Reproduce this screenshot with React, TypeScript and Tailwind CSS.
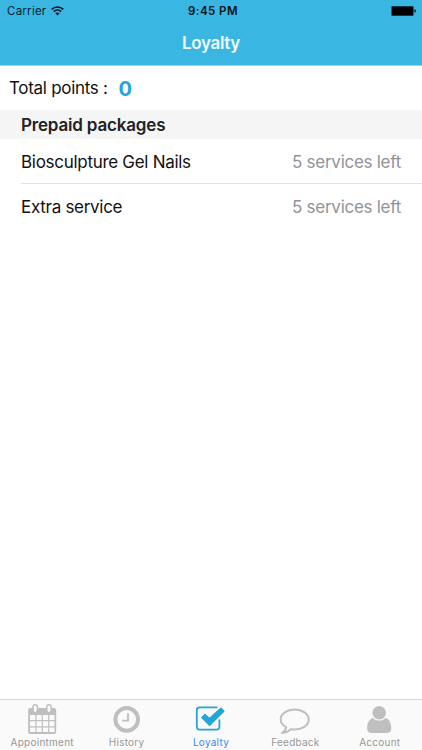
import React from 'react';

interface IPackage {
  name: string;
  left: number;
}

interface ITab {
  label: string;
  icon: React.ReactNode;
  active?: boolean;
}

const packages: IPackage[] = [
  { name: 'Biosculpture Gel Nails', left: 5 },
  { name: 'Extra service', left: 5 },
];

const CalendarIcon = () => (
  <svg width="40" height="34" viewBox="0 0 40 34" fill="none">
    <path
      d="M8.2 7H32.2Q34.2 7 34.2 9V31Q34.2 33 32.2 33H8.2Q6.2 33 6.2 31V9Q6.2 7 8.2 7Z"
      fill="#bfbfbf"
    />
    <path
      d="M8 14h5.3v5H8zM14.5 14h5.2v5h-5.2zM20.9 14h5.2v5h-5.2zM27.3 14h5.2v5h-5.2zM8 20.2h5.3v5H8zM14.5 20.2h5.2v5h-5.2zM20.9 20.2h5.2v5h-5.2zM27.3 20.2h5.2v5h-5.2zM8 26.4h5.3v4.7H8zM14.5 26.4h5.2v4.7h-5.2zM20.9 26.4h5.2v4.7h-5.2zM27.3 26.4h5.2v4.7h-5.2z"
      fill="#fafafa"
    />
    <rect x="11" y="3.8" width="4.4" height="8" rx="2.2" fill="#fafafa" stroke="#bfbfbf" strokeWidth="1.5" />
    <rect x="24.8" y="3.8" width="4.4" height="8" rx="2.2" fill="#fafafa" stroke="#bfbfbf" strokeWidth="1.5" />
  </svg>
);

const ClockIcon = () => (
  <svg width="40" height="34" viewBox="0 0 40 34" fill="none" stroke="#bfbfbf">
    <circle cx="19.7" cy="18.4" r="11.3" strokeWidth="4" />
    <path d="M21 12.2v7.4h-5.8" strokeWidth="1.9" />
  </svg>
);

const CheckIcon = () => (
  <svg width="40" height="34" viewBox="0 0 40 34" fill="none" stroke="#23a6d5">
    <path
      d="M25.8 6.3H8.6Q5.8 6.3 5.8 9.1V25.8Q5.8 28.6 8.6 28.6H25.6Q28.4 28.6 28.4 25.8V19.2"
      strokeWidth="1.8"
      strokeLinecap="round"
    />
    <path
      d="M10.9 16.5l3-2.8 4.6 4L29.9 7.3l2.8 2.8L18.6 24.2Z"
      fill="#23a6d5"
      strokeWidth="1.6"
      strokeLinejoin="round"
    />
  </svg>
);

const BubbleIcon = () => (
  <svg width="40" height="34" viewBox="0 0 40 34" fill="none">
    <path
      d="M19.6 8.6C11.9 8.6 5.7 12.9 5.7 18.4C5.7 21.7 8 24.5 11.2 26.2C10.7 28.8 9.5 30.7 7.1 32C10.6 31.9 13.6 30.6 15.6 28.2C27 29.6 33.7 24.5 33.7 18.4C33.7 12.9 27.4 8.6 19.6 8.6Z"
      stroke="#bfbfbf"
      strokeWidth="2"
      strokeLinejoin="round"
    />
  </svg>
);

const PersonIcon = () => (
  <svg width="40" height="34" viewBox="0 0 40 34" fill="#bfbfbf">
    <circle cx="19.2" cy="11.8" r="6.8" />
    <path d="M12.8 17C9.2 17.8 7.1 22 7.1 27.6C7.1 30.3 8.7 32 11.3 32H27.1C29.7 32 31.3 30.3 31.3 27.6C31.3 22 29.2 17.8 25.6 17C22.2 20.4 16.2 20.4 12.8 17Z" />
  </svg>
);

const tabs: ITab[] = [
  { label: 'Appointment', icon: <CalendarIcon /> },
  { label: 'History', icon: <ClockIcon /> },
  { label: 'Loyalty', icon: <CheckIcon />, active: true },
  { label: 'Feedback', icon: <BubbleIcon /> },
  { label: 'Account', icon: <PersonIcon /> },
];

const StatusBar = () => (
  <div className="grid h-[22px] grid-cols-3 items-center pl-[7px] pr-[6px] text-[11.5px] leading-[22px] text-[#0b222d]">
    <div className="flex items-center gap-[5px]">
      <span className="tracking-[0.25px]">Carrier</span>
      <svg width="13" height="10" viewBox="0 0 13 10" fill="none" stroke="#07151c" strokeWidth="1.6">
        <path d="M0.7 3.4C4 0.2 9 0.2 12.3 3.4" />
        <path d="M2.8 5.6C4.9 3.6 8.1 3.6 10.2 5.6" />
        <path d="M4.4 7.2C5.6 6.1 7.4 6.1 8.6 7.2L6.5 9.4Z" fill="#07151c" stroke="none" />
      </svg>
    </div>
    <span className="pl-[3px] text-center font-semibold tracking-[0.45px] text-[#05141b]">9:45 PM</span>
    <div className="flex items-center justify-end">
      <svg width="25" height="10" viewBox="0 0 25 10">
        <rect x="0.2" y="0" width="22.6" height="10" rx="1.3" fill="#174e62" />
        <rect x="1" y="0.8" width="21" height="8.4" rx="0.5" fill="#000" />
        <path d="M23.4 3.3Q25 3.6 25 5Q25 6.4 23.4 6.7Z" fill="#05141b" />
      </svg>
    </div>
  </div>
);

const PackageRow: React.FC<{ item: IPackage; divider: boolean }> = ({ item, divider }) => (
  <div
    className={[
      'ml-[21px] flex h-[45px] items-center justify-between border-b pr-[21px] pt-[3px] text-[17px]',
      divider ? 'border-[#e3e3e5]' : 'border-transparent',
    ].join(' ')}
  >
    <span className="tracking-[-0.29px] text-[#111]">{item.name}</span>
    <span className="tracking-[-0.27px] text-[#929297]">{item.left} services left</span>
  </div>
);

const App: React.FC = () => (
  <div className="flex h-[750px] w-[422px] flex-col overflow-hidden bg-white font-['Inter',sans-serif]">
    <header className="h-[66px] border-b border-[#9bd8ee] bg-[#3ab6e3]">
      <StatusBar />
      <h1 className="text-center text-[17px] font-semibold leading-[43px] tracking-[-0.35px] text-[#f1fbff]">
        Loyalty
      </h1>
    </header>

    <main className="flex-1">
      <div className="flex h-[44px] items-center pl-[9px] pt-px text-[17px] text-[#111]">
        <span className="tracking-[-0.3px]">Total points :</span>
        <span className="ml-[11px] text-[20px] font-bold text-[#23a6d5]">0</span>
      </div>
      <h2 className="h-[29px] bg-[#f5f5f5] pl-[21px] text-[17px] font-semibold leading-[31px] tracking-[-0.18px] text-[#222]">
        Prepaid packages
      </h2>
      {packages.map((item, i) => (
        <PackageRow key={item.name} item={item} divider={i < packages.length - 1} />
      ))}
    </main>

    <nav className="grid h-[51px] grid-cols-5 border-t border-[#d5d5d5] bg-[#fafafa]">
      {tabs.map(({ label, icon, active }) => (
        <div key={label} className="flex flex-col items-center pt-px">
          {icon}
          <span
            className={[
              'text-[10px] leading-[15px] tracking-[0.25px]',
              active ? 'text-[#3a8ce0]' : 'text-[#979797]',
            ].join(' ')}
          >
            {label}
          </span>
        </div>
      ))}
    </nav>
  </div>
);

export default App;
